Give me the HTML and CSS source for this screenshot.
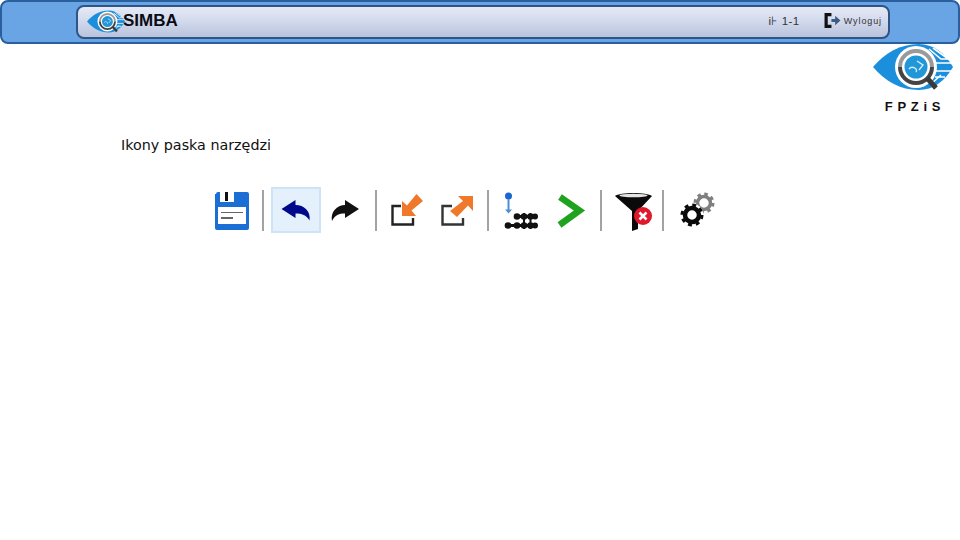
FILE: index.html
```html
<!DOCTYPE html>
<html lang="pl">
<head>
<meta charset="utf-8">
<title>SIMBA</title>
<link rel="stylesheet" href="styles.css">
</head>
<body>
<svg class="defs" width="0" height="0">
  <symbol id="eye" viewBox="0 0 80 48">
    <path d="M0 23 C12 9 27 0 46 0 C60 0 72 9 80 23 C72 37 60 46 46 46 C27 46 12 37 0 23Z" fill="#1c8fdc"/>
    <g fill="none" stroke="#fff" stroke-width="1.6">
      <path d="M56 5 L68 15 H76 M60 4 L74 14 M62 19 H80 M62 27 H80 M62 33 H72 M58 40 L68 31"/>
    </g>
    <circle cx="43" cy="23" r="21" fill="#fff"/>
    <path d="M27 23 A16 16 0 0 1 59 23" fill="none" stroke="#9a9a9a" stroke-width="4"/>
    <path d="M59 23 A16 16 0 0 1 27 23" fill="none" stroke="#444" stroke-width="4"/>
    <circle cx="43" cy="23" r="11.5" fill="#2196d8"/>
    <path d="M36 25 A4 3 0 0 1 43 28 M44 17 L50 21 L46 26" fill="none" stroke="#d4eefb" stroke-width="1.4"/>
    <path d="M54 34 L63 44" stroke="#3a3a3a" stroke-width="5"/>
  </symbol>
</svg>

<header class="topbar">
  <div class="topbar-inner">
    <svg class="logo-small"><use href="#eye"/></svg>
    <span class="brand">SIMBA</span>
    <span class="version">i⊦ 1-1</span>
    <a class="logout">
      <svg class="logout-icon" viewBox="0 0 16 14">
        <path d="M7 1.5 H2 V12.5 H7" fill="none" stroke="#111" stroke-width="3"/>
        <path d="M7 5.5 H10.500 V2.500 L15.500 7 L10.500 11.500 V8.500 H7Z" fill="#3d5a80"/>
      </svg>
      <span>Wyloguj</span>
    </a>
  </div>
</header>

<div class="org">
  <div class="org-block">
    <svg class="logo-large"><use href="#eye"/></svg>
    <div class="org-name">FPZiS</div>
  </div>
</div>

<main class="content">
  <p class="caption">Ikony paska narzędzi</p>
  <div class="toolbar">
    <div class="tool">
      <svg viewBox="0 0 50 46">
        <path d="M8 7 Q8 5 10 5 H39 Q41 5 41 7 V41 Q41 43 39 43 H9 Q7 43 7 41 V7Z" fill="#1b6fd4"/>
        <rect x="12" y="5" width="14" height="10" fill="#fff"/>
        <rect x="17" y="5" width="3" height="9" fill="#111"/>
        <rect x="10" y="20" width="28" height="17" fill="#fff"/>
        <rect x="13" y="25" width="22" height="1" fill="#666"/>
        <rect x="13" y="30" width="12" height="2" fill="#666"/>
      </svg>
    </div>
    <div class="sep"></div>
    <div class="tool tool-active">
      <svg viewBox="0 0 50 46">
        <path d="M10.5 22 L24.5 13 V18 C33 18 40 24 38.5 33.5 C35 28 31 26.5 24.5 26.5 V31Z" fill="#00088c"/>
      </svg>
    </div>
    <div class="tool">
      <svg viewBox="0 0 50 46">
        <path d="M38 22 L24 13 V18 C16 18 9 25 11 34 C14 28 18 26.5 24 26.5 V31Z" fill="#111"/>
      </svg>
    </div>
    <div class="sep"></div>
    <div class="tool">
      <svg viewBox="0 0 50 46">
        <path d="M18 19 H9.5 V37.5 H30 V31" fill="none" stroke="#222" stroke-width="2.400"/>
        <path d="M19 14 V29 H33 L28.500 23.500 L40 14 L33.500 7 L24 18.500Z" fill="#f0782a"/>
      </svg>
    </div>
    <div class="tool">
      <svg viewBox="0 0 50 46">
        <path d="M19 19 H9.500 V37.500 H30 V31" fill="none" stroke="#333" stroke-width="2.400"/>
        <path d="M25 9 H40 V24 L35 18.500 L24 30 L17 24 L30 14Z" fill="#f0782a"/>
      </svg>
    </div>
    <div class="sep"></div>
    <div class="tool">
      <svg viewBox="0 0 50 46">
        <circle cx="12.500" cy="9" r="3.500" fill="#1a66cc"/>
        <path d="M12.500 12 V24" stroke="#4d8fd6" stroke-width="2"/>
        <path d="M9 22.500 H16 L12.500 26.500Z" fill="#4d8fd6"/>
        <path d="M19 29.500 H40 M9 38.500 H40" stroke="#111" stroke-width="3"/>
        <g fill="#111">
          <circle cx="21" cy="29.500" r="3.300"/><circle cx="28" cy="29.500" r="3.300"/><circle cx="34.500" cy="29.500" r="3.300"/><circle cx="39" cy="29.500" r="3"/>
          <circle cx="12" cy="38.500" r="3.300"/><circle cx="21" cy="38.500" r="3.300"/><circle cx="28" cy="38.500" r="3.300"/><circle cx="34.500" cy="38.500" r="3.300"/><circle cx="39" cy="38.500" r="3"/>
        </g>
        <path d="M28 26 V42 M34.500 26 V42" stroke="#111" stroke-width="2"/>
      </svg>
    </div>
    <div class="tool">
      <svg viewBox="0 0 50 46">
        <path d="M14 10 L33.500 23.500 L13.500 38" fill="none" stroke="#1fa31f" stroke-width="6.500"/>
      </svg>
    </div>
    <div class="sep"></div>
    <div class="tool">
      <svg viewBox="0 0 50 46">
        <path d="M7 9 C12 5 39 5 44 9 L30 24 V42 L24 44 V24Z" fill="#0a0a0a"/>
        <ellipse cx="25.500" cy="8.500" rx="14" ry="1.700" fill="#e4e4e4"/>
        <circle cx="35" cy="29" r="9" fill="#e0182c"/>
        <path d="M31.500 25.500 L38.500 32.500 M38.500 25.500 L31.500 32.500" stroke="#fff" stroke-width="2.500"/>
      </svg>
    </div>
    <div class="sep"></div>
    <div class="tool">
      <svg viewBox="0 0 50 46">
        <circle cx="33" cy="16" r="6.500" fill="none" stroke="#7f7f7f" stroke-width="3.500"/>
        <circle cx="33" cy="16" r="9" fill="none" stroke="#7f7f7f" stroke-width="3" stroke-dasharray="3.500 3.570"/>
        <circle cx="21" cy="28" r="11.500" fill="#fff"/>
        <circle cx="21" cy="28" r="7" fill="none" stroke="#0a0a0a" stroke-width="4.500"/>
        <circle cx="21" cy="28" r="10" fill="none" stroke="#0a0a0a" stroke-width="3" stroke-dasharray="3.900 3.950"/>
      </svg>
    </div>
  </div>
</main>
</body>
</html>
```
FILE: styles.css
```css
* { box-sizing: border-box; }

body {
  margin: 0;
  width: 960px;
  height: 540px;
  overflow: hidden;
  background: #fff;
  font-family: "Liberation Sans", sans-serif;
  color: #111;
}

.defs { display: block; height: 0; }

.topbar {
  height: 44px;
  padding: 3px 68px 4px 74px;
  background: #69a4e4;
  border: 2px solid #2a5f9e;
  border-radius: 8px;
}

.topbar-inner {
  height: 34px;
  display: flex;
  align-items: center;
  padding-left: 9px;
  border: 2px solid #2f5488;
  border-radius: 8px;
  background: linear-gradient(#e6eaf6, #d5dcee 40%, #b8c3dc);
}

.logo-small { width: 38px; height: 24px; flex: none; }

.brand {
  margin-left: -2px;
  margin-top: -2px;
  font-size: 17px;
  font-weight: bold;
  color: #0b0b14;
}

.version {
  margin-left: auto;
  margin-top: -3px;
  font-size: 11.500px;
  letter-spacing: .5px;
  color: #333;
}

.logout {
  margin-left: 24px;
  margin-right: 6px;
  margin-top: -3px;
  display: flex;
  align-items: center;
  gap: 3px;
  font-size: 9px;
  letter-spacing: .9px;
  color: #333;
}

.logout-icon { width: 17px; height: 15px; }

.org {
  display: flex;
  justify-content: flex-end;
  padding-right: 6px;
}

.org-block {
  width: 82px;
  display: flex;
  flex-direction: column;
  align-items: center;
}

.logo-large { width: 80px; height: 48px; }

.org-name {
  margin-top: 7px;
  margin-left: 4px;
  font-size: 13px;
  line-height: 15px;
  font-weight: bold;
  letter-spacing: 4.700px;
  color: #111;
}

.content { padding-left: 121px; }

.caption {
  margin: 21px 0 0;
  font-family: "DejaVu Sans", sans-serif;
  font-size: 14.300px;
  line-height: 20px;
}

.toolbar {
  margin: 32px 0 0 87px;
  display: flex;
  align-items: center;
  height: 46px;
}

.tool {
  width: 50px;
  height: 46px;
  flex: none;
  border: 2px solid transparent;
}

.tool svg {
  display: block;
  width: 50px;
  height: 46px;
  margin: -2px;
}

.tool-active {
  background: #e4f0fb;
  border-color: #cfe3f6;
}

.sep {
  width: 12.500px;
  height: 41px;
  flex: none;
  padding-left: 4px;
}

.sep::before {
  content: "";
  display: block;
  width: 2px;
  height: 100%;
  background: #a3a3a3;
}
```
